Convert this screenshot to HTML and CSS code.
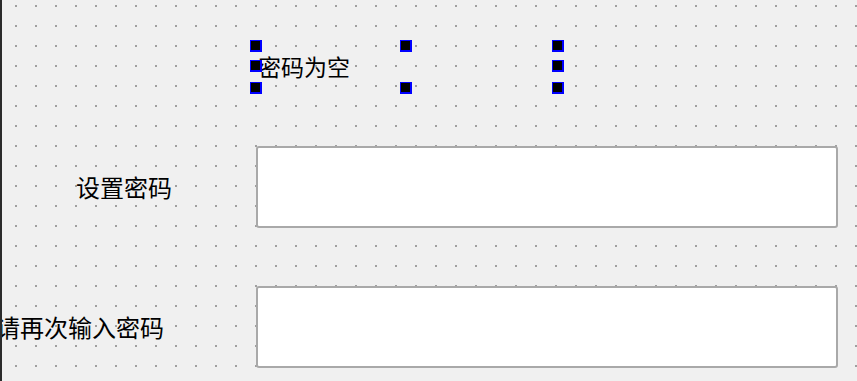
FILE: index.html
```html
<!DOCTYPE html>
<html lang="zh-CN">
<head>
<meta charset="utf-8">
<title>密码为空</title>
<link rel="stylesheet" href="styles.css">
</head>
<body>
<div class="canvas">
  <div class="title">密码为空</div>
  <div class="form">
    <div class="row">
      <label class="lbl lbl-set">设置密码</label>
      <div class="input"></div>
    </div>
    <div class="row">
      <label class="lbl lbl-again">请再次输入密码</label>
      <div class="input"></div>
    </div>
  </div>
  <span class="handle h-tl"></span>
  <span class="handle h-tc"></span>
  <span class="handle h-tr"></span>
  <span class="handle h-ml"></span>
  <span class="handle h-mr"></span>
  <span class="handle h-bl"></span>
  <span class="handle h-bc"></span>
  <span class="handle h-br"></span>
</div>
</body>
</html>
```
FILE: styles.css
```css
html, body {
  margin: 0;
  padding: 0;
  overflow: hidden;
}
body {
  width: 857px;
  height: 381px;
  background: #f0f0f0;
  font-family: "Noto Sans CJK SC", "Noto Sans", sans-serif;
  color: #000;
}
.canvas {
  position: relative;
  width: 857px;
  height: 381px;
  box-sizing: border-box;
  padding-top: 45px;
  background-color: #f0f0f0;
  background-image: conic-gradient(from 270deg at 2px 2px, #a0a0a0 25%, transparent 0);
  background-size: 20px 20px;
  background-position: 15px 5px;
  overflow: hidden;
}
.canvas::before {
  content: "";
  position: absolute;
  left: 0;
  top: 0;
  width: 2px;
  height: 100%;
  background: #2b2b2b;
  z-index: 2;
}
.title {
  margin-left: 256px;
  width: 302px;
  height: 43px;
  box-sizing: border-box;
  padding-left: 2px;
  font-size: 23px;
  line-height: 43px;
  white-space: nowrap;
}
.form {
  margin-top: 58px;
  display: flex;
  flex-direction: column;
  gap: 58px;
}
.row {
  display: grid;
  grid-template-columns: 256px 582px;
  height: 82px;
  align-items: center;
}
.lbl {
  font-size: 24px;
  line-height: 30px;
  white-space: nowrap;
}
.lbl-set {
  padding-left: 76px;
}
.lbl-again {
  margin-left: -4px;
}
.input {
  box-sizing: border-box;
  height: 82px;
  background: #fff;
  border: 2px solid #a9a9a9;
  border-radius: 3px;
}
.handle {
  position: absolute;
  width: 12px;
  height: 12px;
  box-sizing: border-box;
  background: #000;
  border: 1px solid #0000ff;
  border-right-width: 2px;
  border-bottom-width: 2px;
  z-index: 3;
}
.h-tl { left: 250px; top: 40px; }
.h-tc { left: 400px; top: 40px; }
.h-tr { left: 552px; top: 40px; }
.h-ml { left: 250px; top: 60px; }
.h-mr { left: 552px; top: 60px; }
.h-bl { left: 250px; top: 82px; }
.h-bc { left: 400px; top: 82px; }
.h-br { left: 552px; top: 82px; }
```
